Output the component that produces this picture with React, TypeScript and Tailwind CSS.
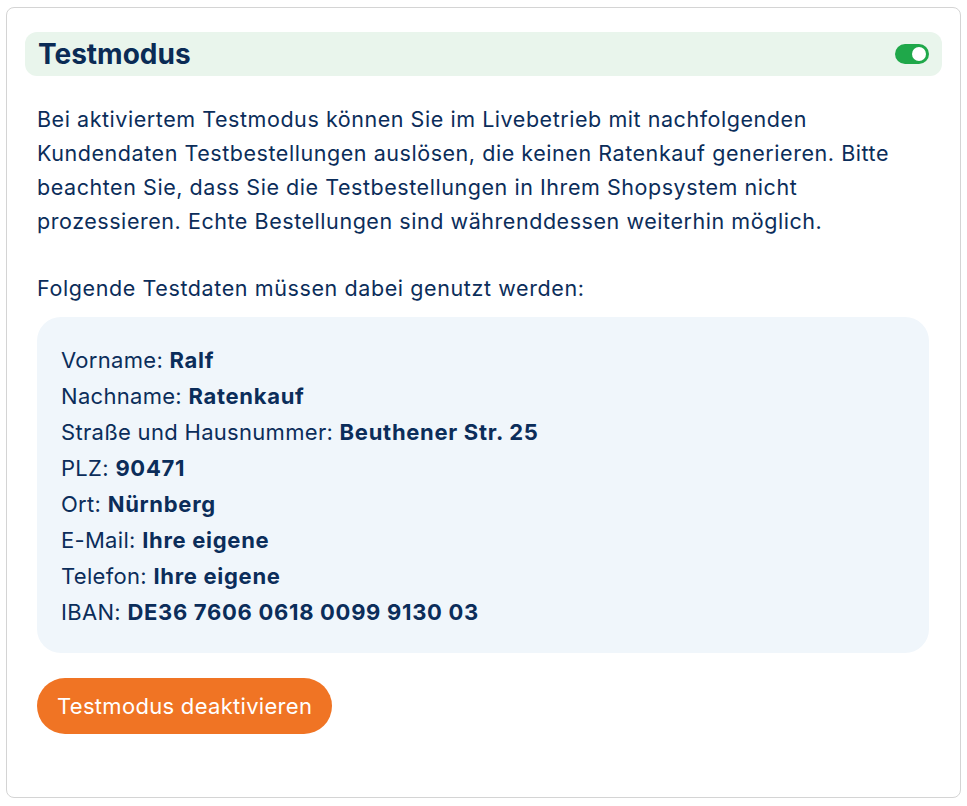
export default function App() {
  const rows: [string, string][] = [
    ['Vorname', 'Ralf'],
    ['Nachname', 'Ratenkauf'],
    ['Straße und Hausnummer', 'Beuthener Str. 25'],
    ['PLZ', '90471'],
    ['Ort', 'Nürnberg'],
    ['E-Mail', 'Ihre eigene'],
    ['Telefon', 'Ihre eigene'],
    ['IBAN', 'DE36 7606 0618 0099 9130 03'],
  ];

  return (
    <div className="bg-white min-h-screen pt-[7px] px-[6px] font-['Inter',sans-serif] text-[#0b2d5a]">
      <div className="h-[791px] w-[955px] rounded-lg border border-[#d4d4d4] bg-white px-[18px] pt-[24px]">
        {/* Header */}
        <div className="flex h-[44px] items-center justify-between rounded-xl bg-[#e9f5ec] px-[13px]">
          <h2 className="text-[28px] font-bold leading-none text-[#0a2b55]">Testmodus</h2>
          <button className="relative h-[20px] w-[34px] rounded-full bg-[#1fa84a]">
            <span className="absolute right-[3px] top-[3px] h-[14px] w-[14px] rounded-full bg-white" />
          </button>
        </div>

        <div className="px-[12px]">
          <p className="mt-[26px] text-[21.5px] leading-[34px] tracking-[0.55px]">
            Bei aktiviertem Testmodus können Sie im Livebetrieb mit nachfolgenden
            <br />
            Kundendaten Testbestellungen auslösen, die keinen Ratenkauf generieren. Bitte
            <br />
            beachten Sie, dass Sie die Testbestellungen in Ihrem Shopsystem nicht
            <br />
            prozessieren. Echte Bestellungen sind währenddessen weiterhin möglich.
          </p>
          <p className="mt-[33px] text-[21.5px] leading-[34px] tracking-[0.6px]">
            Folgende Testdaten müssen dabei genutzt werden:
          </p>

          <div className="mt-[12px] w-[892px] rounded-3xl bg-[#f0f6fb] px-[24px] pt-[25px] pb-[23px]">
            {rows.map(([label, value]) => (
              <div key={label} className="text-[22px] leading-[36px] tracking-[0.3px]">
                {label}: <span className="font-bold tracking-[0.7px]">{value}</span>
              </div>
            ))}
          </div>

          <button className="mt-[25px] h-[56px] rounded-full bg-[#f07424] px-[20px] text-[22px] tracking-[0.3px] text-white">
            Testmodus deaktivieren
          </button>
        </div>
      </div>
    </div>
  );
}
